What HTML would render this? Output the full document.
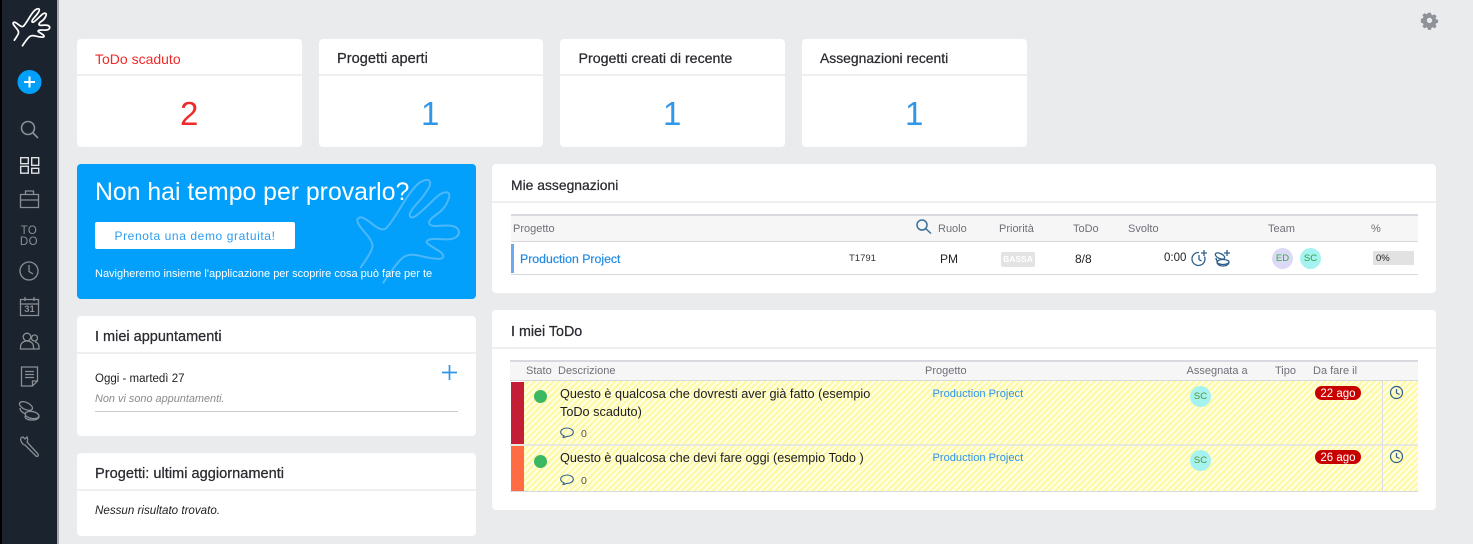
<!DOCTYPE html>
<html lang="it"><head><meta charset="utf-8"><title>Dashboard</title>
<style>
*{box-sizing:border-box}
html,body{margin:0;padding:0;width:1473px;height:544px;overflow:hidden;background:#eaebed;font-family:"Liberation Sans",sans-serif;color:#222}
.a{position:absolute}
.t{position:absolute;white-space:nowrap;line-height:1}
.card{position:absolute;background:#fff;border-radius:4px}
.hr{position:absolute;height:2px;background:#eeeff1}
.h{font-size:14.2px;color:#2a2a30;font-weight:400;-webkit-text-stroke:.25px #2a2a30}
.n{font-size:33px;color:#2f96e8}
.th{font-size:11px;color:#6f6f78}
.stripes{background-color:#fffee6;background-image:repeating-linear-gradient(135deg,#fffee6 0,#fffee6 2.2px,#fff9a2 2.2px,#fff9a2 4.400px)}
.av{position:absolute;width:21px;height:21px;border-radius:50%;font-size:9.500px;line-height:21px;text-align:center;color:#5f8f2a;background:#a4f3f1}
.badge{position:absolute;width:46px;height:14px;border-radius:7px;background:#c90000;color:#fff;font-size:11.500px;line-height:16px;text-align:center}
.td{font-size:12.700px;color:#1d1d1d}
svg{position:absolute;overflow:visible}
</style></head><body>

<!-- sidebar -->
<div class="a" style="left:0;top:0;width:2px;height:544px;background:#000"></div>
<div class="a" style="left:2px;top:0;width:55px;height:544px;background:#1b232e"></div>
<div class="a" style="left:57px;top:0;width:2px;height:544px;background:#a6a8ab"></div>
<svg style="left:0;top:0" width="58" height="544" fill="none" stroke="#8b8f95" stroke-width="1.300">
 <g transform="translate(-87.800 3) scale(.36)"><path stroke="#fff" stroke-width="4.800" stroke-linecap="round" d="M283.700 103.300Q296.300 86 295.500 81Q294.700 76 288 68.500Q281.300 61 280.500 57.500Q279.700 54.300 283 53.500Q286.300 52.700 295.500 60.200Q304.700 67.700 308.900 64.400Q313 61 324.600 41.900Q336.300 22.700 343 18.500Q349.700 14.300 352.200 16.800Q354.700 19.300 350.500 26Q346.300 32.700 338.800 41Q331.300 49.300 333 52.300Q334.700 55.300 340.500 50.700Q346.300 46 354.600 37.700Q363 29.300 367.200 28.500Q371.300 27.700 372.200 30.200Q373 32.700 369.700 39.400Q366.300 46 358.800 51Q351.300 56 352.200 59.400Q353 62.700 361.400 61.900Q369.700 61 374.700 61.900Q379.700 62.700 381.400 66Q383 69.300 379.700 72.700Q376.300 76 365.500 75.200Q354.700 74.300 351.400 76Q348 77.700 351.400 80.200Q354.700 82.700 360.500 86Q366.300 89.300 366.300 92.300Q366.300 95.300 359.700 94.800Q353 94.300 343 91.800Q333 89.300 327.200 92.700Q321.300 96 306.300 118.700"/></g>
 <circle cx="29.500" cy="82" r="12" fill="#03a0fb" stroke="none"/>
 <path d="M29.500 76.500v11M24 82h11" stroke="#fff" stroke-width="2"/>
 <circle cx="28" cy="128" r="6.500" stroke-width="1.600"/><path d="M33 133l5 5" stroke-width="1.800"/>
 <path stroke="#dfe0e2" stroke-width="1.400" d="M20.700 157.700h7.600v6h-7.600zM20.700 166.300h7.600v6.900h-7.600zM31.700 157.700h7v7.600h-7zM31.700 168.300h7v4.900h-7z"/>
 <path d="M20.500 194.500h18v13h-18zM25.500 194v-3h8v3M20.500 200h18"/>
 <circle cx="29" cy="271" r="9"/><path d="M29 265v6.500l4 2.500"/>
 <path d="M20.500 299.500h18v16h-18zM20.500 304h18M25 297v4M34 297v4"/>
 <circle cx="27" cy="337" r="3.800"/><circle cx="34.500" cy="338" r="3"/><path d="M20.500 349v-2c0-4 3-6 6.500-6s6.500 2 6.500 6v2zM35 342c2 0 4 2 4 5v2h-5"/>
 <path d="M21.500 367h16v14l-5 5h-11zM37.500 381h-5v5M25 371.500h9M25 374.500h9M25 377.500h9"/>
 <ellipse cx="26" cy="406" rx="7" ry="3.500" transform="rotate(25 26 406)"/><ellipse cx="32" cy="415" rx="7" ry="3.500" transform="rotate(10 32 415)"/><path d="M20 408c0 3 3 5 6 6M25 416c0 3 3 4 7 4 4 0 7-1 7-4"/>
 <path d="M21 441c-1-2 0-4 2-4l2 2 2-2c1 2 1 3 0 5l11 12c1 2-1 3-2 2l-11-11c-2 0-3-2-4-4z"/>
</svg>
<div class="t" style="left:19px;top:226px;width:20px;font-size:11.500px;line-height:10.500px;color:#8b8f95;text-align:center;white-space:normal;letter-spacing:.5px">TO DO</div>
<div class="t" style="left:23px;top:304.500px;width:13px;font-size:9.500px;color:#8b8f95;text-align:center;font-weight:bold">31</div>

<!-- gear -->
<svg style="left:1421px;top:12px" width="17" height="17" viewBox="0 0 17 17"><path fill="#8f9299" fill-rule="evenodd" d="M7 1h3l.4 2 1.500.6 1.700-1.100 2 2-1.100 1.700.6 1.500 2 .4v3l-2 .4-.6 1.500 1.100 1.700-2 2-1.700-1.100-1.500.6-.4 2H7l-.4-2-1.500-.6-1.700 1.100-2-2 1.100-1.700-.6-1.500-2-.4V7l2-.4.6-1.500-1.100-1.700 2-2 1.700 1.100 1.500-.6zM8.500 6a2.700 2.700 0 1 0 0 5.400 2.700 2.700 0 0 0 0-5.400z" transform="translate(0 -.3)"/></svg>

<!-- stat cards -->
<div class="card" style="left:77px;top:39px;width:225px;height:108px"></div>
<div class="card" style="left:319px;top:39px;width:224px;height:108px"></div>
<div class="card" style="left:560px;top:39px;width:225px;height:108px"></div>
<div class="card" style="left:802px;top:39px;width:225px;height:108px"></div>
<div class="hr" style="left:77px;top:74px;width:225px"></div>
<div class="hr" style="left:319px;top:74px;width:224px"></div>
<div class="hr" style="left:560px;top:74px;width:225px"></div>
<div class="hr" style="left:802px;top:74px;width:225px"></div>
<div class="t h" style="left:95px;top:52px;color:#f02a2a;-webkit-text-stroke:0;font-size:14px">ToDo scaduto</div>
<div class="t h" style="left:337px;top:52px;font-size:14.600px">Progetti aperti</div>
<div class="t h" style="left:578.500px;top:52px">Progetti creati di recente</div>
<div class="t h" style="left:820px;top:52px;font-size:13.900px">Assegnazioni recenti</div>
<div class="t n" style="left:180px;top:97px;color:#f02a2a">2</div>
<div class="t n" style="left:421px;top:97px">1</div>
<div class="t n" style="left:663px;top:97px">1</div>
<div class="t n" style="left:905px;top:97px">1</div>

<!-- banner -->
<div class="card" style="left:77px;top:164px;width:399px;height:135px;background:#03a0fb;overflow:hidden">
 <svg style="left:0;top:0" width="399" height="135" fill="none" stroke="#4cb8fa" stroke-width="2" stroke-linecap="round"><path d="M283.700 103.300Q296.300 86 295.500 81Q294.700 76 288 68.500Q281.300 61 280.500 57.500Q279.700 54.300 283 53.500Q286.300 52.700 295.500 60.200Q304.700 67.700 308.900 64.400Q313 61 324.600 41.900Q336.300 22.700 343 18.500Q349.700 14.300 352.200 16.800Q354.700 19.300 350.500 26Q346.300 32.700 338.800 41Q331.300 49.300 333 52.300Q334.700 55.300 340.500 50.700Q346.300 46 354.600 37.700Q363 29.300 367.200 28.500Q371.300 27.700 372.200 30.200Q373 32.700 369.700 39.400Q366.300 46 358.800 51Q351.300 56 352.200 59.400Q353 62.700 361.400 61.900Q369.700 61 374.700 61.900Q379.700 62.700 381.400 66Q383 69.300 379.700 72.700Q376.300 76 365.500 75.200Q354.700 74.300 351.400 76Q348 77.700 351.400 80.200Q354.700 82.700 360.500 86Q366.300 89.300 366.300 92.300Q366.300 95.300 359.700 94.800Q353 94.300 343 91.800Q333 89.300 327.200 92.700Q321.300 96 306.300 118.700"/></svg>
</div>
<div class="t" style="left:95px;top:181px;font-size:24.800px;color:#fff;font-weight:400">Non hai tempo per provarlo?</div>
<div class="a" style="left:95px;top:222px;width:200px;height:27px;background:#fff;border-radius:2px"></div>
<div class="t" style="left:95px;top:229.500px;width:200px;text-align:center;font-size:12px;color:#2b9cf0;letter-spacing:.6px">Prenota una demo gratuita!</div>
<div class="t" style="left:95px;top:268.500px;font-size:11px;color:#fff">Navigheremo insieme l'applicazione per scoprire cosa può fare per te</div>

<!-- appuntamenti -->
<div class="card" style="left:77px;top:316px;width:399px;height:120px"></div>
<div class="hr" style="left:77px;top:352px;width:399px"></div>
<div class="t h" style="left:95px;top:329.500px;font-size:14.500px">I miei appuntamenti</div>
<div class="t" style="left:95px;top:373.500px;font-size:11.500px;color:#222">Oggi - martedì 27</div>
<div class="t" style="left:95px;top:393.500px;font-size:10.900px;font-style:italic;color:#8a8a8a">Non vi sono appuntamenti.</div>
<div class="a" style="left:95px;top:411px;width:363px;height:1px;background:#c9cacc"></div>
<svg style="left:442px;top:365px" width="15" height="15" fill="none" stroke="#2f96e8" stroke-width="1.700"><path d="M7.500 0v15M0 7.500h15"/></svg>

<!-- progetti -->
<div class="card" style="left:77px;top:453px;width:399px;height:83px"></div>
<div class="hr" style="left:77px;top:489px;width:399px"></div>
<div class="t h" style="left:95px;top:466.500px;font-size:14.600px">Progetti: ultimi aggiornamenti</div>
<div class="t" style="left:95px;top:505px;font-size:11.600px;font-style:italic;color:#222">Nessun risultato trovato.</div>

<!-- mie assegnazioni -->
<div class="card" style="left:492px;top:164px;width:944px;height:129px"></div>
<div class="hr" style="left:492px;top:201px;width:944px"></div>
<div class="t h" style="left:511px;top:178.500px;font-size:13.900px">Mie assegnazioni</div>
<div class="a" style="left:511px;top:214px;width:907px;height:28px;background:#f6f6f7;border-top:2px solid #d8d9de;border-bottom:1px solid #d8d9de"></div>
<div class="t th" style="left:513px;top:224px">Progetto</div>
<svg style="left:916px;top:219px" width="16" height="16" fill="none" stroke="#3c6f96" stroke-width="1.500"><circle cx="6" cy="6" r="5"/><path d="M9.500 9.500l5.500 5"/></svg>
<div class="t th" style="left:938px;top:224px">Ruolo</div>
<div class="t th" style="left:999px;top:224px">Priorità</div>
<div class="t th" style="left:1073px;top:224px">ToDo</div>
<div class="t th" style="left:1128px;top:224px">Svolto</div>
<div class="t th" style="left:1268px;top:224px">Team</div>
<div class="t th" style="left:1371px;top:224px">%</div>
<div class="a" style="left:511px;top:244px;width:3px;height:29px;background:#6ea8ee"></div>
<div class="t" style="left:520px;top:252.500px;font-size:12.300px;color:#1f8ae6;-webkit-text-stroke:.2px #1f8ae6">Production Project</div>
<div class="t" style="left:849px;top:253.500px;font-size:9.500px;color:#333">T1791</div>
<div class="t" style="left:940px;top:252.500px;font-size:12px;color:#222">PM</div>
<div class="a" style="left:1001px;top:252px;width:34px;height:15px;background:#e3e3e3;border-radius:2px;color:#fff;font-size:8.500px;line-height:15px;text-align:center;font-weight:bold">BASSA</div>
<div class="t" style="left:1075px;top:252.500px;font-size:12px;color:#222">8/8</div>
<div class="t" style="left:1164px;top:253px;font-size:11.500px;color:#222">0:00</div>
<svg style="left:1191px;top:250px" width="48" height="18" fill="none" stroke="#2e5f8a" stroke-width="1.300">
 <path d="M13.500 6.500A6.500 6.500 0 1 1 8 2.500M8 5v4.500l2.500 1.500M13 0v6M10 3h6"/>
 <ellipse cx="29" cy="6" rx="5" ry="2.500" transform="rotate(25 29 6)"/><ellipse cx="32" cy="12" rx="6" ry="2.500"/><path d="M25 8c0 2 1 3 2 4M26 13c1 2 3 3 6 3s5-1 6-3M36 0v6M33 3h6"/>
</svg>
<div class="av" style="left:1272px;top:248px;background:#dcd9f7;color:#2fae3e">ED</div>
<div class="av" style="left:1300px;top:248px;color:#2fa03e">SC</div>
<div class="a" style="left:1373px;top:251px;width:41px;height:14px;background:#e2e2e2;font-size:9.500px;line-height:15px;padding-left:3px;color:#222">0%</div>
<div class="a" style="left:511px;top:274px;width:907px;height:1px;background:#d8d9de"></div>

<!-- miei todo -->
<div class="card" style="left:492px;top:310px;width:944px;height:200px"></div>
<div class="hr" style="left:492px;top:347px;width:944px"></div>
<div class="t h" style="left:511px;top:324.500px;font-size:14.300px">I miei ToDo</div>
<div class="a" style="left:510px;top:360px;width:908px;height:21px;background:#f6f6f7;border-top:2px solid #d8d9de;border-bottom:1px solid #d8d9de"></div>
<div class="t th" style="left:526px;top:366px">Stato</div>
<div class="t th" style="left:558px;top:366px">Descrizione</div>
<div class="t th" style="left:925px;top:366px">Progetto</div>
<div class="t th" style="left:1186.500px;top:366px">Assegnata a</div>
<div class="t th" style="left:1275px;top:366px">Tipo</div>
<div class="t th" style="left:1313px;top:366px">Da fare il</div>

<div class="a stripes" style="left:524px;top:381px;width:894px;height:63px"></div>
<div class="a stripes" style="left:524px;top:445px;width:894px;height:46px"></div>
<div class="a" style="left:511px;top:382px;width:13px;height:62px;background:#c41d36"></div>
<div class="a" style="left:511px;top:446px;width:13px;height:45px;background:#ff6b42"></div>
<div class="a" style="left:510px;top:444px;width:908px;height:2px;background:#e8e8dc"></div>
<div class="a" style="left:510px;top:491px;width:908px;height:1px;background:#d8d9de"></div>
<div class="a" style="left:1382px;top:381px;width:1px;height:110px;background:#dcdcea"></div>

<div class="a" style="left:534px;top:390px;width:13px;height:13px;border-radius:50%;background:#3cb863"></div>
<div class="a" style="left:534px;top:455px;width:13px;height:13px;border-radius:50%;background:#3cb863"></div>

<div class="t td" style="left:560px;top:388px">Questo è qualcosa che dovresti aver già fatto (esempio</div>
<div class="t td" style="left:560px;top:406px">ToDo scaduto)</div>
<div class="t td" style="left:560px;top:452px">Questo è qualcosa che devi fare oggi (esempio Todo )</div>

<svg style="left:560px;top:427px" width="14" height="13" fill="none" stroke="#2e5f8a" stroke-width="1.100"><path d="M2.500 10.500c1-.5 1.500-1.200 1.500-1.700C2 8 .7 6.800.7 5.200.7 2.800 3.500 1 7 1s6.300 1.800 6.300 4.200S10.500 9.400 7 9.400c-1 0-1.400.9-4.500 1.100z"/></svg>
<svg style="left:560px;top:474px" width="14" height="13" fill="none" stroke="#2e5f8a" stroke-width="1.100"><path d="M2.500 10.500c1-.5 1.500-1.200 1.500-1.700C2 8 .7 6.800.7 5.200.7 2.800 3.500 1 7 1s6.300 1.800 6.300 4.200S10.500 9.400 7 9.400c-1 0-1.400.9-4.500 1.100z"/></svg>
<div class="t" style="left:581px;top:428.500px;font-size:10.500px;color:#555">0</div>
<div class="t" style="left:581px;top:475.500px;font-size:10.500px;color:#555">0</div>

<div class="t" style="left:932.500px;top:388.500px;font-size:11.100px;color:#2b94ea">Production Project</div>
<div class="t" style="left:932.500px;top:452.500px;font-size:11.100px;color:#2b94ea">Production Project</div>

<div class="av" style="left:1190px;top:386px">SC</div>
<div class="av" style="left:1190px;top:450px">SC</div>

<div class="badge" style="left:1315px;top:386px">22 ago</div>
<div class="badge" style="left:1315px;top:450px">26 ago</div>

<svg style="left:1389px;top:386px" width="15" height="15" fill="none" stroke="#2e5f8a" stroke-width="1.200"><circle cx="7.500" cy="6.500" r="6"/><path d="M7.500 3v4l3 1.500"/></svg>
<svg style="left:1389px;top:450px" width="15" height="15" fill="none" stroke="#2e5f8a" stroke-width="1.200"><circle cx="7.500" cy="6.500" r="6"/><path d="M7.500 3v4l3 1.500"/></svg>

</body></html>
